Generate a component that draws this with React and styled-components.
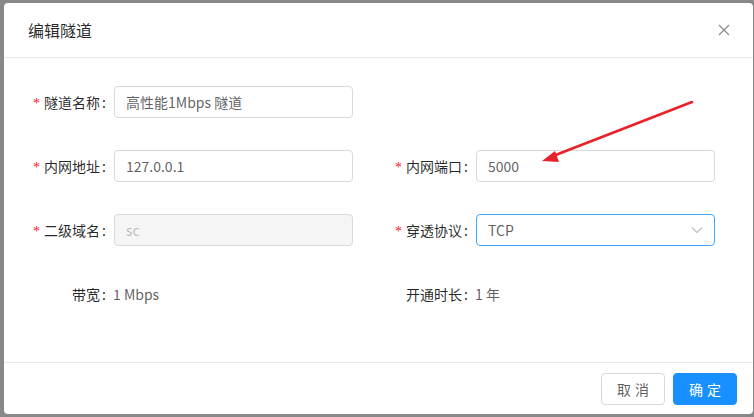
import React from "react";
import styled, { createGlobalStyle } from "styled-components";

const Global = createGlobalStyle`
  html, body {
    margin: 0;
    padding: 0;
    background: #888888;
    font-family: "Noto Sans CJK SC", "Noto Sans", sans-serif;
  }
`;

const Mask = styled.div`
  position: relative;
  width: 754px;
  height: 417px;
  box-sizing: border-box;
  padding: 3px 1px 3px 4px;
  background: #888888;
  overflow: hidden;
`;

const Modal = styled.div`
  background: #fff;
  border-radius: 4px;
  height: 411px;
  display: flex;
  flex-direction: column;
`;

const Header = styled.div`
  display: flex;
  align-items: center;
  justify-content: space-between;
  padding: 16px 24px;
  height: 22px;
  border-bottom: 1px solid #e8e8e8;
`;

const Title = styled.div`
  font-size: 16px;
  line-height: 22px;
  color: rgba(0, 0, 0, 0.85);
`;

const Close = styled.button`
  border: 0;
  background: none;
  padding: 0;
  width: 16px;
  height: 16px;
  display: flex;
  align-items: center;
  justify-content: center;
  margin-right: -3px;
  cursor: pointer;
`;

const Body = styled.div`
  flex: 1;
  padding: 28px 24px 0;
  display: grid;
  grid-template-columns: 325px 325px;
  column-gap: 37px;
  row-gap: 32px;
  align-content: start;
`;

const Item = styled.div`
  display: flex;
  align-items: center;
  height: 32px;
`;

const Label = styled.label`
  width: 86px;
  flex-shrink: 0;
  text-align: right;
  font-size: 14px;
  color: rgba(0, 0, 0, 0.85);
  white-space: nowrap;
  &::after {
    content: ":";
    margin: 0 8px 0 2px;
  }
`;

const Star = styled.span`
  color: #f5222d;
  font-family: "Liberation Serif", serif;
  font-size: 14px;
  margin-right: 4px;
`;

const Input = styled.div`
  box-sizing: border-box;
  width: 239px;
  height: 32px;
  padding: 0 11px;
  display: flex;
  align-items: center;
  justify-content: space-between;
  border: 1px solid ${(p) => (p.$focused ? "#40a9ff" : "#d9d9d9")};
  border-radius: 4px;
  background: ${(p) => (p.$disabled ? "#f5f5f5" : "#fff")};
  font-size: 14px;
  color: ${(p) => (p.$disabled ? "rgba(0,0,0,0.25)" : "rgba(0,0,0,0.65)")};
`;

const Value = styled.span`
  font-size: 14px;
  margin-left: -1px;
  color: rgba(0, 0, 0, 0.65);
`;

const Footer = styled.div`
  display: flex;
  justify-content: flex-end;
  gap: 8px;
  padding: 10px 16px 9px;
  border-top: 1px solid #e8e8e8;
`;

const Button = styled.button`
  box-sizing: border-box;
  height: 32px;
  width: 64px;
  padding: 0;
  border-radius: 4px;
  font-family: inherit;
  font-size: 14px;
  letter-spacing: 4px;
  text-indent: 4px;
  border: 1px solid ${(p) => (p.$primary ? "#1890ff" : "#d9d9d9")};
  background: ${(p) => (p.$primary ? "#1890ff" : "#fff")};
  color: ${(p) => (p.$primary ? "#fff" : "rgba(0,0,0,0.65)")};
`;

const Arrow = styled.svg`
  position: absolute;
  left: 0;
  top: 0;
  pointer-events: none;
`;

const Field = ({ label, required, children }) => (
  <Item>
    <Label>
      {required && <Star>*</Star>}
      {label}
    </Label>
    {children}
  </Item>
);

export default function App() {
  return (
    <>
      <Global />
      <Mask>
        <Modal>
          <Header>
            <Title>编辑隧道</Title>
            <Close>
              <svg width="12" height="12" viewBox="0 0 12 12">
                <path d="M1 1L11 11M11 1L1 11" stroke="rgba(0,0,0,0.45)" strokeWidth="1.3" fill="none" />
              </svg>
            </Close>
          </Header>
          <Body>
            <Field label="隧道名称" required>
              <Input>高性能1Mbps 隧道</Input>
            </Field>
            <div />
            <Field label="内网地址" required>
              <Input>127.0.0.1</Input>
            </Field>
            <Field label="内网端口" required>
              <Input>5000</Input>
            </Field>
            <Field label="二级域名" required>
              <Input $disabled>sc</Input>
            </Field>
            <Field label="穿透协议" required>
              <Input $focused>
                TCP
                <svg width="12" height="8" viewBox="0 0 12 8">
                  <path d="M1 1.5L6 6.5L11 1.5" stroke="rgba(0,0,0,0.25)" strokeWidth="1.2" fill="none" />
                </svg>
              </Input>
            </Field>
            <Field label="带宽">
              <Value>1 Mbps</Value>
            </Field>
            <Field label="开通时长">
              <Value>1 年</Value>
            </Field>
          </Body>
          <Footer>
            <Button>取消</Button>
            <Button $primary>确定</Button>
          </Footer>
        </Modal>
        <Arrow width="754" height="417" viewBox="0 0 754 417">
          <line x1="692" y1="102" x2="553" y2="156" stroke="#e8212b" strokeWidth="2.6" strokeLinecap="round" />
          <polygon points="542,161 555,151 559,162" fill="#e8212b" />
        </Arrow>
      </Mask>
    </>
  );
}
